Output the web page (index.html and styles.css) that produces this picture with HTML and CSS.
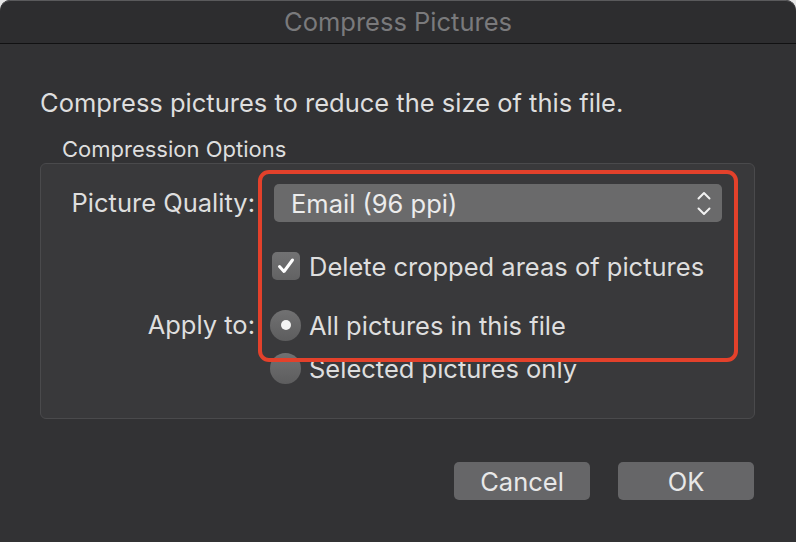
FILE: index.html
```html
<!DOCTYPE html>
<html lang="en">
<head>
<meta charset="utf-8">
<title>Compress Pictures</title>
<link rel="stylesheet" href="styles.css">
</head>
<body>
<div class="window">
  <div class="titlebar">Compress Pictures</div>
  <div class="content">
    <p class="intro">Compress pictures to reduce the size of this file.</p>
    <div class="group-label">Compression Options</div>
    <div class="group">
      <div class="form">
        <div class="label">Picture Quality:</div>
        <div class="popup">
          <span class="popup-text">Email (96 ppi)</span>
          <svg class="chevrons" width="14" height="25" viewBox="0 0 14 25"><path d="M1.5 7.5 L7 2 L12.5 7.5 M1.5 17.5 L7 23 L12.5 17.5" fill="none" stroke="#f2f2f2" stroke-width="2" stroke-linecap="round" stroke-linejoin="round"/></svg>
        </div>
        <div class="spacer"></div>
        <div class="option check-row">
          <span class="checkbox"><svg width="28" height="28" viewBox="0 0 28 28"><path d="M7.5 14.5 L12 19.5 L20.5 8" fill="none" stroke="#ffffff" stroke-width="3" stroke-linecap="round" stroke-linejoin="round"/></svg></span>
          <span>Delete cropped areas of pictures</span>
        </div>
        <div class="label">Apply to:</div>
        <div class="radios">
          <div class="option"><span class="radio checked"></span><span>All pictures in this file</span></div>
          <div class="option"><span class="radio"></span><span>Selected pictures only</span></div>
        </div>
      </div>
      <div class="highlight"></div>
    </div>
    <div class="buttons">
      <button class="btn">Cancel</button>
      <button class="btn">OK</button>
    </div>
  </div>
</div>
</body>
</html>
```

FILE: styles.css
```css
html, body {
  margin: 0;
  padding: 0;
  background: #e6e6e6;
}
body {
  width: 796px;
  height: 542px;
  overflow: hidden;
  font-family: Inter, "Noto Sans", sans-serif;
  color: #dedede;
}
.window {
  width: 796px;
  height: 542px;
  background: #323234;
  border-radius: 10px 10px 0 0;
  overflow: hidden;
}
.titlebar {
  height: 43px;
  line-height: 44px;
  text-align: center;
  font-size: 25.5px;
  color: #7a7a7c;
  background: #2d2d2f;
  border-bottom: 1px solid #111112;
  box-shadow: inset 0 1px 0 #5a5a5c;
  border-radius: 10px 10px 0 0;
}
.content {
  padding: 44px 41px 0 40px;
}
.intro {
  margin: 0;
  font-size: 25.5px;
  line-height: 30px;
}
.group-label {
  margin: 19px 0 2px 22px;
  font-size: 22px;
  line-height: 24px;
}
.group {
  position: relative;
  box-sizing: border-box;
  height: 256px;
  border: 1px solid #4a4a4c;
  border-radius: 6px;
  background: #39393b;
  padding: 20px 32px 0 0;
}
.form {
  display: grid;
  grid-template-columns: 214px 1fr;
  column-gap: 19px;
  row-gap: 21px;
  align-items: center;
}
.label {
  text-align: right;
  font-size: 25.5px;
  line-height: 38px;
  align-self: start;
}
.popup {
  height: 38px;
  border-radius: 5px;
  background: #6a6a6b;
  display: flex;
  align-items: center;
  justify-content: space-between;
  padding: 0 11px 0 17px;
  font-size: 25.5px;
  color: #ececec;
}
.chevrons {
  display: block;
}
.option {
  display: flex;
  align-items: center;
  height: 38px;
  font-size: 25.5px;
  gap: 8px;
}
.check-row {
  margin-top: 4px;
  margin-left: -2px;
  gap: 9px;
}
.checkbox {
  width: 28px;
  height: 28px;
  border-radius: 5px;
  background: linear-gradient(#727273, #626263);
  display: block;
}
.checkbox svg {
  display: block;
}
.radios {
  display: flex;
  flex-direction: column;
  gap: 5px;
}
.radio {
  width: 31px;
  height: 31px;
  margin-left: -4px;
  border-radius: 50%;
  background: linear-gradient(#717172, #5d5d5e);
  position: relative;
  flex: none;
}
.radio.checked::after {
  content: "";
  position: absolute;
  left: 10.5px;
  top: 10.5px;
  width: 10px;
  height: 10px;
  border-radius: 50%;
  background: #f4f4f4;
}
.highlight {
  position: absolute;
  left: 217px;
  top: 6px;
  width: 480px;
  height: 192px;
  box-sizing: border-box;
  border: 4.5px solid #e3412b;
  border-radius: 11px;
  pointer-events: none;
}
.buttons {
  display: flex;
  justify-content: flex-end;
  gap: 28px;
  margin-top: 43px;
  padding-right: 1px;
}
.btn {
  width: 136px;
  height: 38px;
  border: none;
  border-radius: 5px;
  background: #666668;
  color: #e8e8e8;
  font-family: Inter, "Noto Sans", sans-serif;
  font-size: 25.5px;
  padding: 0;
}
```
